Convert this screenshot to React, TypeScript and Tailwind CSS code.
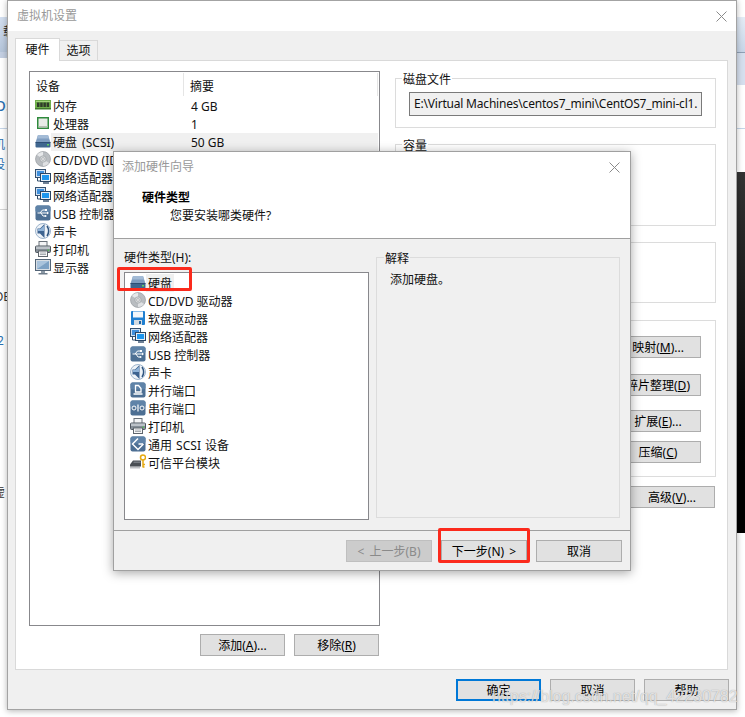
import React from "react";

const FONT = "[font-family:'Noto_Sans','Noto_Sans_CJK_SC',sans-serif]";

const Hdd = () => (
  <svg width="16" height="16" viewBox="0 0 16 16" className="shrink-0">
    <path d="M3 2h10l2.500 7.500H.5z" fill="#7f9dc0" />
    <path d="M3 2h10l1 3.500H2z" fill="#a3bbd6" />
    <rect x="0.500" y="9" width="15" height="5.500" rx="1" fill="#3f668f" />
    <rect x="0.500" y="9" width="15" height="1" fill="#2d4f75" />
    <rect x="12" y="11" width="2" height="1.500" fill="#63d35f" />
  </svg>
);
const Ram = () => (
  <svg width="16" height="16" viewBox="0 0 16 16" className="shrink-0">
    <rect x="0" y="3" width="16" height="9" fill="#6fae4b" />
    <rect x="1" y="4" width="14" height="1" fill="#a5d37f" />
    <rect x="2" y="5.500" width="2.500" height="4.500" fill="#2f3b2a" />
    <rect x="5.200" y="5.500" width="2.500" height="4.500" fill="#2f3b2a" />
    <rect x="8.400" y="5.500" width="2.500" height="4.500" fill="#2f3b2a" />
    <rect x="11.600" y="5.500" width="2.500" height="4.500" fill="#2f3b2a" />
    <rect x="0" y="11" width="16" height="1.500" fill="#3f7a2b" />
  </svg>
);
const Cpu = () => (
  <svg width="16" height="16" viewBox="0 0 16 16" className="shrink-0">
    <rect x="2" y="2" width="12" height="12" fill="#2f8a3c" />
    <rect x="3.500" y="3.500" width="9" height="9" fill="#e8ebe6" />
    <rect x="3.500" y="11" width="9" height="1.500" fill="#b5bdb2" />
  </svg>
);
const Cd = () => (
  <svg width="16" height="16" viewBox="0 0 16 16" className="shrink-0">
    <circle cx="8" cy="8" r="7.500" fill="#b9bdc1" stroke="#8f9398" strokeWidth="0.600" />
    <path d="M8 8 L2 4 A7 7 0 0 1 8 1z" fill="#e6e8ea" />
    <path d="M8 8 L14 12 A7 7 0 0 1 8 15z" fill="#dfe1e3" />
    <circle cx="8" cy="8" r="3.200" fill="#d5d8da" stroke="#94989c" strokeWidth="0.600" />
    <circle cx="8" cy="8" r="1.300" fill="#fff" stroke="#7f8388" strokeWidth="0.500" />
  </svg>
);
const Net = () => (
  <svg width="16" height="16" viewBox="0 0 16 16" className="shrink-0">
    <rect x="0.500" y="0.500" width="10" height="8" fill="#cfe0f2" stroke="#35506e" />
    <rect x="2" y="2" width="7" height="5" fill="#3f8fdc" />
    <path d="M2.500 9v3h3" fill="none" stroke="#35506e" />
    <rect x="5.500" y="4.500" width="10" height="8" fill="#e6eef6" stroke="#2b4563" />
    <rect x="7" y="6" width="7" height="5" fill="#1e96ee" />
    <rect x="8" y="13" width="6" height="2" fill="#6f8196" />
  </svg>
);
const IconTile = ({ children }: { children: React.ReactNode }) => (
  <svg width="16" height="16" viewBox="0 0 16 16" className="shrink-0">
    <rect x="0.500" y="0.500" width="15" height="15" rx="2" fill="#4d6f93" />
    <rect x="0.500" y="0.500" width="15" height="7" rx="2" fill="#5f83a8" />
    {children}
  </svg>
);
const Usb = () => (
  <IconTile>
    <path d="M2.500 8h10M5 8l2.500-3H10M6 8l2 3h2" fill="none" stroke="#fff" strokeWidth="1" />
    <path d="M12 6.500l2 1.500-2 1.500z" fill="#fff" />
    <rect x="10" y="4" width="2" height="2" fill="#fff" />
    <circle cx="10.500" cy="11" r="1" fill="#fff" />
  </IconTile>
);
const Sound = () => (
  <svg width="16" height="16" viewBox="0 0 16 16" className="shrink-0">
    <ellipse cx="8" cy="8" rx="7.500" ry="7.500" fill="#eef3f8" stroke="#86a2c0" strokeWidth="0.800" />
    <path d="M12 3C14 6 14 10 12 13" fill="none" stroke="#2f5580" strokeWidth="1.500" />
    <path d="M2.500 5.500h2.500L9.500 1v14L5 10.500H2.500z" fill="#3d6390" />
    <path d="M3 6h2.300L9 2.800V8H3z" fill="#8fb3d8" />
  </svg>
);
const Printer = () => (
  <svg width="16" height="16" viewBox="0 0 16 16" className="shrink-0">
    <rect x="4" y="0.500" width="8" height="5" fill="#f4f5f6" stroke="#6b727a" />
    <rect x="0.500" y="5" width="15" height="6.500" rx="1" fill="#858e97" stroke="#4f565e" />
    <rect x="1" y="5.500" width="14" height="2.500" fill="#bcc2c8" />
    <rect x="12.500" y="8.500" width="1.500" height="1.500" fill="#53c74e" />
    <rect x="3.500" y="10" width="9" height="5.500" fill="#f7f7f7" stroke="#5f666d" />
    <path d="M5 12h6M5 13.500h6" stroke="#a8adb2" />
  </svg>
);
const Monitor = () => (
  <svg width="16" height="16" viewBox="0 0 16 16" className="shrink-0">
    <rect x="0.500" y="0.500" width="15" height="11" fill="#d7dde3" stroke="#536577" />
    <rect x="2" y="2" width="12" height="8" fill="#7da1c4" />
    <path d="M2 2h12L2 10z" fill="#a9c3dc" />
    <rect x="6" y="12" width="4" height="2" fill="#8c99a6" />
    <rect x="3.500" y="14" width="9" height="1.500" fill="#6f7d8b" />
  </svg>
);
const Floppy = () => (
  <svg width="16" height="16" viewBox="0 0 16 16" className="shrink-0">
    <rect x="1" y="1" width="14" height="14" rx="1" fill="#1f7fd1" />
    <rect x="3" y="1.500" width="10" height="6" fill="#f3f7fb" />
    <rect x="4" y="10" width="8" height="5" fill="#d3dbe3" />
    <rect x="9" y="11" width="2" height="3" fill="#23639c" />
  </svg>
);
const Parallel = () => (
  <IconTile>
    <path d="M5.500 3.500h3l2.500 3V10H5.500z" fill="none" stroke="#fff" strokeWidth="1.300" />
    <path d="M3.500 12h9" stroke="#fff" strokeWidth="1.500" />
  </IconTile>
);
const Serial = () => (
  <IconTile>
    <circle cx="4" cy="8" r="2" fill="none" stroke="#fff" />
    <circle cx="12" cy="8" r="2" fill="none" stroke="#fff" />
    <path d="M8 4.500v7" stroke="#fff" strokeWidth="1.200" />
  </IconTile>
);
const Scsi = () => (
  <IconTile>
    <path d="M8 2.500L2.500 8 8 13.500l5.500-5.500" fill="none" stroke="#fff" strokeWidth="1.500" />
    <path d="M13 8H8.500" stroke="#fff" strokeWidth="1.500" />
  </IconTile>
);
const Tpm = () => (
  <svg width="16" height="16" viewBox="0 0 16 16" className="shrink-0">
    <path d="M0 10.500L3 6.500h8v6H0z" fill="#4a4f54" />
    <path d="M1 12.500v2M3 12.500v2M5 12.500v2M7 12.500v2M9 12.500v2" stroke="#6d7278" strokeWidth="0.900" />
    <path d="M3.500 7.500h7V9h-7z" fill="#777c82" />
    <circle cx="13" cy="3.500" r="2.500" fill="none" stroke="#e6a90f" strokeWidth="1.500" />
    <path d="M13 6v7.500M13 10.500h2M13 13h1.500" stroke="#e6a90f" strokeWidth="1.500" />
  </svg>
);

const CloseX = () => (
  <svg width="11" height="11" viewBox="0 0 11 11" className="shrink-0">
    <path d="M0.500 0.500l10 10M10.500 0.500l-10 10" stroke="#8a8a8a" strokeWidth="1" />
  </svg>
);

const Btn = ({ children, className = "" }: { children: React.ReactNode; className?: string }) => (
  <div className={`flex h-[22px] shrink-0 items-center justify-center border border-[#adadad] bg-[#e1e1e1] pt-[2px] text-[12px] text-black ${className}`}>
    {children}
  </div>
);

const Key = ({ children }: { children: React.ReactNode }) => <span className="underline">{children}</span>;

const Group = ({ title, className = "", children }: { title?: string; className?: string; children?: React.ReactNode }) => (
  <div className={`relative border border-[#dcdcdc] ${className}`}>
    {title && <span className="absolute -top-[8px] left-[6px] bg-white px-[1px] text-[12px] leading-[18px] text-[#111]">{title}</span>}
    {children}
  </div>
);

const devices: [React.ReactNode, string, string, boolean][] = [
  [<Ram />, "内存", "4 GB", false],
  [<Cpu />, "处理器", "1", false],
  [<Hdd />, "硬盘 (SCSI)", "50 GB", true],
  [<Cd />, "CD/DVD (IDE)", "", false],
  [<Net />, "网络适配器", "", false],
  [<Net />, "网络适配器", "", false],
  [<Usb />, "USB 控制器", "", false],
  [<Sound />, "声卡", "", false],
  [<Printer />, "打印机", "", false],
  [<Monitor />, "显示器", "", false],
];

const hardware: [React.ReactNode, string][] = [
  [<Hdd />, "硬盘"],
  [<Cd />, "CD/DVD 驱动器"],
  [<Floppy />, "软盘驱动器"],
  [<Net />, "网络适配器"],
  [<Usb />, "USB 控制器"],
  [<Sound />, "声卡"],
  [<Parallel />, "并行端口"],
  [<Serial />, "串行端口"],
  [<Printer />, "打印机"],
  [<Scsi />, "通用 SCSI 设备"],
  [<Tpm />, "可信平台模块"],
];

export default function App() {
  return (
    <div className={`relative h-[717px] w-[745px] overflow-hidden bg-white text-[12px] leading-[18px] text-[#111] ${FONT}`}>
      {/* Window behind, left sliver */}
      <div className="absolute left-0 top-[17px] h-[35px] w-[8px] bg-gradient-to-b from-[#d3dff0] to-[#b5c5da]">
        <span className="absolute left-[3px] top-[6px] text-[12px] text-[#222]">载</span>
      </div>
      <div className="absolute left-0 top-[52px] h-[6px] w-[8px] bg-[#c3cfe2]" />
      <span className="absolute left-[-5px] top-[92px] text-[18px] leading-[24px] text-[#2a6fb0]">os</span>
      <div className="absolute left-0 top-[128px] h-px w-[8px] bg-[#c5d5e8]" />
      <span className="absolute left-[-7px] top-[136px] text-[#2a6fb0]">机</span>
      <span className="absolute left-[-7px] top-[156px] text-[#2a6fb0]">设</span>
      <div className="absolute left-0 top-[209px] h-px w-[8px] bg-[#d5d5d5]" />
      <span className="absolute left-[-6px] top-[288px] text-[#333]">OE</span>
      <span className="absolute left-[-3px] top-[332px] text-[#2a6fb0]">2</span>
      <span className="absolute left-[-7px] top-[484px] text-[#333]">虚</span>

      {/* Window behind, right sliver */}
      <div className="absolute left-[737px] top-[17px] h-[35px] w-[8px] bg-gradient-to-b from-[#e4ecf6] to-[#c8d6e8]" />
      <div className="absolute left-[737px] top-[52px] h-[33px] w-[8px] border-t border-[#8fa0b5] bg-[#d6dfee]" />
      <div className="absolute left-[737px] top-[128px] h-px w-[8px] bg-[#c5d5e8]" />
      <div className="absolute left-[737px] top-[172px] h-[361px] w-[8px] bg-gradient-to-b from-[#333333] via-[#111111] to-[#000000]" />

      {/* Main window */}
      <div className="absolute left-[7px] top-0 flex h-[710px] w-[730px] flex-col border border-[#a3a3a3] bg-[#f0f0f0] shadow-[0_1px_6px_rgba(0,0,0,0.3)]">
        <div className="flex h-[30px] shrink-0 items-center justify-between bg-white pl-[9px] pr-[9px]">
          <span className="text-[12px] text-[#999]">虚拟机设置</span>
          <CloseX />
        </div>
        <div className="flex h-[29px] shrink-0 items-end pl-[7px]">
          <div className="relative z-10 -mb-px flex h-[23px] w-[45px] items-center justify-center border border-b-0 border-[#d9d9d9] bg-white">硬件</div>
          <div className="flex h-[20px] w-[38px] items-center justify-center border border-l-0 border-b-0 border-[#d9d9d9] bg-[#f0f0f0]">选项</div>
        </div>
        <div className="ml-[7px] flex h-[610px] w-[713px] shrink-0 gap-[15px] border border-[#d9d9d9] bg-white pl-[13px] pt-[10px]">
          <div className="flex w-[351px] shrink-0 flex-col">
            <div className="flex h-[555px] flex-col border border-[#88888c]">
              <div className="flex h-[25px] shrink-0 items-center pl-[6px]">
                <span className="h-[23px] w-[148px] border-r border-[#e5e5e5] pt-[5px]">设备</span>
                <span className="mr-[1px] h-[23px] flex-1 border-r border-[#e5e5e5] pl-[6px] pt-[5px]">摘要</span>
              </div>
              {devices.map(([icon, name, summary, sel], i) => (
                <div key={i} className="flex h-[18px] shrink-0 pl-[5px]">
                  {icon}
                  <div className={`mr-[1px] flex flex-1 items-center pl-[2px] ${sel ? "bg-[#f0f0f0]" : ""}`}>
                    <span className={`relative top-px w-[138px] whitespace-nowrap ${sel ? "[word-spacing:2px]" : ""}`}>{name}</span>
                    <span className="relative top-px">{summary}</span>
                  </div>
                </div>
              ))}
            </div>
            <div className="mt-[8px] flex justify-end gap-[9px] pr-px">
              <Btn className="w-[85px]">添加(<Key>A</Key>)...</Btn>
              <Btn className="w-[85px]">移除(<Key>R</Key>)</Btn>
            </div>
          </div>

          <div className="flex w-[321px] shrink-0 flex-col pt-[7px]">
            <Group title="磁盘文件" className="h-[50px] shrink-0 pl-[13px] pt-[13px]">
              <div className="flex h-[24px] w-[293px] items-center overflow-hidden whitespace-nowrap border border-[#7a7a7a] bg-[#f0f0f0] pl-[4px] tracking-[-0.2px]">
                E:\Virtual Machines\centos7_mini\CentOS7_mini-cl1.
              </div>
            </Group>
            <Group title="容量" className="mt-[16px] h-[82px] shrink-0" />
            <Group className="mt-[16px] h-[61px] shrink-0" />
            <Group className="mt-[17px] flex h-[157px] shrink-0 flex-col items-end pr-[14px] pt-[15px]">
              <Btn className="w-[86px]">映射(<Key>M</Key>)...</Btn>
              <Btn className="mt-[16px] w-[86px]">碎片整理(<Key>D</Key>)</Btn>
              <Btn className="mt-[14px] w-[86px]">扩展(<Key>E</Key>)...</Btn>
              <Btn className="mt-[9px] w-[86px]">压缩(<Key>C</Key>)</Btn>
            </Group>
            <div className="mt-[9px] flex justify-end">
              <Btn className="mr-px w-[86px]">高级(<Key>V</Key>)...</Btn>
            </div>
          </div>
        </div>
        <div className="flex flex-1 items-start justify-end gap-[9px] pr-[7px] pt-[9px]">
          <Btn className="w-[85px] !border-2 !border-[#0078d7]">确定</Btn>
          <Btn className="w-[85px]">取消</Btn>
          <Btn className="w-[85px]">帮助</Btn>
        </div>
      </div>

      {/* Wizard dialog */}
      <div className="absolute left-[113px] top-[151px] flex h-[420px] w-[518px] flex-col border border-[#a0a0a0] bg-[#f0f0f0] shadow-[0_2px_10px_rgba(0,0,0,0.35)]">
        <div className="flex h-[87px] shrink-0 flex-col border-b border-[#a0a0a0] bg-white">
          <div className="flex h-[30px] shrink-0 items-center justify-between pl-[8px] pr-[10px]">
            <span className="text-[#999]">添加硬件向导</span>
            <CloseX />
          </div>
          <div className="pl-[28px] pt-[7px] font-bold text-black">硬件类型</div>
          <div className="pl-[56px]">您要安装哪类硬件?</div>
        </div>
        <div className="flex flex-1 gap-[7px] pl-[10px] pt-[10px]">
          <div className="flex w-[245px] flex-col">
            <div className="h-[18px]">硬件类型(H):</div>
            <div className="mt-[5px] flex h-[248px] flex-col border border-[#88888c] bg-white pt-px">
              {hardware.map(([icon, name], i) => (
                <div key={i} className="flex h-[18px] shrink-0 pl-[5px]">
                  {icon}
                  <span className={`pl-[2px] pr-[2px] ${i === 0 ? "bg-[#f0f0f0]" : ""}`}>
                    <span className={`relative top-px whitespace-nowrap ${i === 9 ? "[word-spacing:1px]" : ""}`}>{name}</span>
                  </span>
                </div>
              ))}
            </div>
          </div>
          <div className="relative mt-[8px] h-[261px] w-[244px] border border-[#dcdcdc] pl-[13px] pt-[12px]">
            <span className="absolute -top-[8px] left-[7px] bg-[#f0f0f0] px-[1px]">解释</span>
            <span className="relative top-px">添加硬盘。</span>
          </div>
        </div>
        <div className="flex h-[40px] shrink-0 items-start justify-end gap-[9px] border-t border-[#a0a0a0] pr-[8px] pt-[9px]">
          <Btn className="w-[86px] !border-[#bfbfbf] !bg-[#cccccc] !text-[#8a8a8a] [word-spacing:2px]">&lt; 上一步(B)</Btn>
          <Btn className="w-[86px] [word-spacing:2px]">下一步(N) &gt;</Btn>
          <Btn className="w-[86px]">取消</Btn>
        </div>
      </div>

      {/* Annotations */}
      <div className="absolute left-[117px] top-[267px] h-[24px] w-[75px] rounded-[2px] border-[3px] border-[#fb2a1c]" />
      <div className="absolute left-[438px] top-[528px] h-[35px] w-[92px] rounded-[2px] border-[3px] border-[#fb2a1c]" />

      {/* Watermark */}
      <div className="absolute left-[492px] top-[687px] whitespace-nowrap font-['Liberation_Sans',sans-serif] text-[16px] leading-[20px] text-white/70 [text-shadow:0_0_1px_rgba(90,90,90,0.6)]">
        https://blog.csdn.net/qq_42230782
      </div>
    </div>
  );
}
